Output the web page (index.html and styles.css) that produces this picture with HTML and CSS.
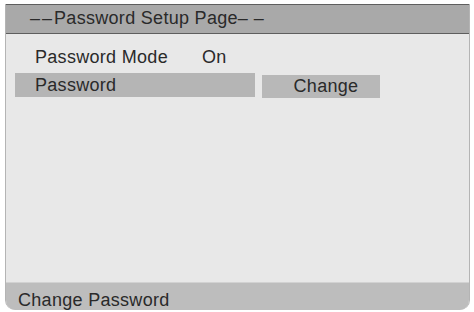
FILE: index.html
```html
<!DOCTYPE html>
<html lang="en">
<head>
    <meta charset="UTF-8">
    <meta name="viewport" content="width=device-width, initial-scale=1.0">
    <title>Password Setup Page</title>
    <link rel="stylesheet" href="styles.css">
</head>
<body>
    <div class="screen">
        <!-- Title bar -->
        <div class="title-bar"><span class="dash">&ndash;&ndash;</span>Password Setup Page<span class="dash-end">&ndash; &ndash;</span></div>

        <!-- Menu items -->
        <div class="menu">
            <div class="menu-row">
                <span class="menu-label">Password Mode</span>
                <span class="menu-value">On</span>
            </div>
            <div class="menu-row selected">
                <span class="menu-label">Password</span>
                <span class="menu-button">Change</span>
            </div>
        </div>

        <!-- Help line -->
        <div class="status-bar">Change Password</div>
    </div>
</body>
</html>
```

FILE: styles.css
```css
* {
    margin: 0;
    padding: 0;
    box-sizing: border-box;
}

body {
    background-color: #ffffff;
    font-family: 'Liberation Sans', Arial, sans-serif;
    font-size: 18px;
    color: #2a2a2a;
    letter-spacing: 0.3px;
}

.screen {
    display: flex;
    flex-direction: column;
    width: 465px;
    height: 306px;
    margin: 4px 0 0 5px;
    background-color: #e8e8e8;
    border-left: 1px solid #b4b4b4;
    border-right: 1px solid #b4b4b4;
    border-radius: 0 0 10px 10px;
    overflow: hidden;
}

/* Title bar */
.title-bar {
    height: 30px;
    padding: 0 0 0 24px;
    line-height: 26px;
    background-color: #a9a9a9;
    border: 1px solid #5e5e5e;
    margin: 0 -1px;
}

.title-bar .dash {
    letter-spacing: 2px;
}

.title-bar .dash-end {
    letter-spacing: 0.5px;
}

/* Menu */
.menu {
    flex: 1;
    display: flex;
    flex-direction: column;
    gap: 4px;
    padding-top: 11px;
}

.menu-row {
    display: flex;
    align-items: flex-start;
    height: 24px;
    line-height: 24px;
}

.menu-label {
    flex: none;
    width: 196px;
    padding-left: 29px;
}

.menu-row.selected .menu-label {
    width: 240px;
    margin-left: 9px;
    padding-left: 20px;
    background-color: #b5b5b5;
}

.menu-button {
    width: 118px;
    height: 23px;
    margin-top: 2px;
    margin-left: 7px;
    line-height: 22px;
    text-align: center;
    padding-left: 10px;
    background-color: #b8b8b8;
}

/* Status bar */
.status-bar {
    height: 28px;
    padding: 6px 0 0 12px;
    line-height: 22px;
    background-color: #bdbdbd;
    border-top: 1px solid #d2d2d2;
}
```
